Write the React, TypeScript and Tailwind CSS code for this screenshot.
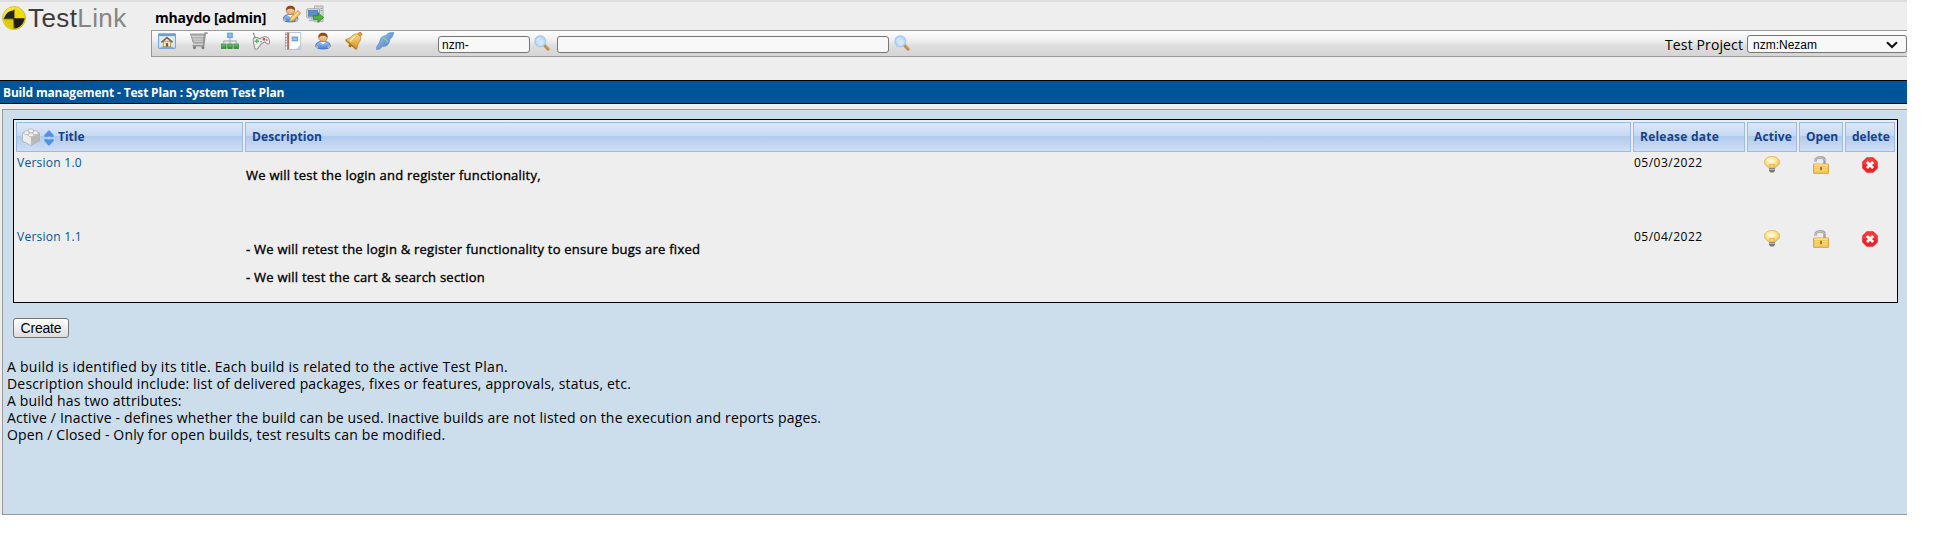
import type { ReactNode } from "react";

function Icon({ children, className = "w-4 h-4" }: { children: ReactNode; className?: string }) {
  return (
    <svg viewBox="0 0 16 16" className={"block shrink-0 " + className} aria-hidden="true">
      {children}
    </svg>
  );
}

function Defs() {
  return (
    <svg className="absolute h-0 w-0" aria-hidden="true">
      <defs>
        <linearGradient id="skin" x1="0" y1="0" x2="0" y2="1">
          <stop offset="0" stopColor="#f9dcb4" />
          <stop offset="1" stopColor="#e0a870" />
        </linearGradient>
        <linearGradient id="shirt" x1="0" y1="0" x2="0" y2="1">
          <stop offset="0" stopColor="#9ccbff" />
          <stop offset="1" stopColor="#3f7fdc" />
        </linearGradient>
        <linearGradient id="gold" x1="0" y1="0" x2="1" y2="1">
          <stop offset="0" stopColor="#ffe99a" />
          <stop offset="1" stopColor="#dc9020" />
        </linearGradient>
        <linearGradient id="green" x1="0" y1="0" x2="0" y2="1">
          <stop offset="0" stopColor="#7ec87a" />
          <stop offset="1" stopColor="#258a2c" />
        </linearGradient>
        <linearGradient id="plug" x1="0" y1="0" x2="1" y2="1">
          <stop offset="0" stopColor="#a8ccf5" />
          <stop offset="1" stopColor="#3c74bd" />
        </linearGradient>
        <radialGradient id="bulb" cx=".45" cy=".4" r=".6">
          <stop offset="0" stopColor="#fffef0" />
          <stop offset=".55" stopColor="#fde68c" />
          <stop offset="1" stopColor="#efb658" />
        </radialGradient>
        <radialGradient id="lens" cx=".55" cy=".6" r=".6">
          <stop offset="0" stopColor="#e2f1ff" />
          <stop offset="1" stopColor="#a5ccf5" />
        </radialGradient>
        <linearGradient id="yellow" x1="0" y1="0" x2="1" y2="1">
          <stop offset="0" stopColor="#fff04a" />
          <stop offset="1" stopColor="#dcc800" />
        </linearGradient>
      </defs>
    </svg>
  );
}

function Logo() {
  return (
    <svg viewBox="0 0 24 24" className="block h-6 w-6 shrink-0" aria-hidden="true">
      <circle cx="12" cy="12" r="11.600" fill="url(#yellow)" />
      <path d="M12 12.500V4.500C8 4 3.500 7 2 12.500Z" fill="#242424" />
      <path d="M11.500 12.500H22.500C22 17.500 17.500 22 12.500 22.500Z" fill="#1c1c1c" />
      <path d="M1.500 13.500H11V22C6.500 22 2.500 18 1.500 13.500Z" fill="#dccb00" />
      <path d="M12.500 2.500C18 3 21.500 6.500 22 11.500H12.500Z" fill="#efdc08" />
      <path d="M1.500 12.800H22.500M12 3.500V22.500" stroke="#2c2a10" strokeWidth=".9" />
      <circle cx="12" cy="12" r="11.500" fill="none" stroke="#b8ab20" strokeWidth=".6" />
    </svg>
  );
}

function Person() {
  return (
    <>
      <path d="M1.500 12.800C1.500 9.500 4 8.400 8 8.400s6.500 1.100 6.500 4.400c0 3-13 3-13 0Z" fill="url(#shirt)" stroke="#3b70c4" strokeWidth=".8" />
      <path d="M5.300 8.700h5.400L8 11Z" fill="#fff" />
      <path d="M1.700 12.300l1.900 2M14.300 12.300l-1.900 2" stroke="#e9b27c" strokeWidth="1.500" />
      <circle cx="8" cy="5" r="3.700" fill="url(#skin)" stroke="#b37339" strokeWidth=".6" />
      <path d="M4 5.400C3.500 1.800 5.300.6 8 .6s4.500 1.200 4 4.800C11.300 3.800 9.500 3.300 7.600 3.300S4.600 4.200 4 5.400Z" fill="#8f4a1c" />
    </>
  );
}

function UserIcon() {
  return <Icon className="h-[18px] w-[18px]"><Person /></Icon>;
}

function UserEditIcon() {
  return (
    <Icon className="h-[18px] w-[18px]">
      <g transform="translate(-1.300 0)"><Person /></g>
      <path d="M5.600 14.900l1-3.500 6.600-6.300 2.300 2.300-6.600 6.500Z" fill="#f9cf6a" stroke="#c98a2b" strokeWidth=".8" />
      <path d="M13.200 5.100l2.300 2.300" stroke="#eaa47c" strokeWidth="1.500" />
      <path d="M7.800 12.400l6-5.800" stroke="#fff0b8" strokeWidth=".8" />
    </Icon>
  );
}

function LogoutIcon() {
  return (
    <Icon className="h-[18px] w-[18px]">
      <path d="M7.500.8h7.700v14H7.500Z" fill="#d4d7da" stroke="#a2a6aa" strokeWidth=".7" />
      <path d="M13 3h1.500M13 5h1.500" stroke="#888" strokeWidth=".7" />
      <rect x=".7" y="3.400" width="11.300" height="8" rx=".6" fill="#e3e5e7" stroke="#909498" strokeWidth=".7" />
      <rect x="2.200" y="4.800" width="8.300" height="5.200" fill="#5590d2" stroke="#3768a6" strokeWidth=".5" />
      <path d="M2.500 13.800h6M5 11.500v2" stroke="#b5b9bd" strokeWidth="1.500" />
      <path d="M6.600 9.500H10.600V6.800L15.600 11.200 10.600 15.600V12.900H6.600Z" fill="#54ae43" stroke="#2f8027" strokeWidth=".7" />
    </Icon>
  );
}

function HomeIcon() {
  return (
    <Icon className="h-[18px] w-[18px]">
      <rect x=".5" y="1.500" width="15" height="13" rx=".7" fill="#dceafb" stroke="#7ba5dd" />
      <path d="M.5 2.600h15" stroke="#6f9cdb" strokeWidth="2" />
      <path d="M4.800 8.300h6.400v4.900H4.800Z" fill="#f4e6c8" stroke="#a98148" strokeWidth=".7" />
      <path d="M3 9.200L8 5l5 4.200" fill="none" stroke="#8d6437" strokeWidth="1.500" />
      <path d="M7 9.800h2v3.400H7Z" fill="#8a5a2c" />
      <path d="M2.500 13.500h11" stroke="#83a86d" />
    </Icon>
  );
}

function CartIcon() {
  return (
    <Icon className="h-[18px] w-[18px]">
      <path d="M.5 1.800H12.900L11.800 9.800H3Z" fill="#b4b4b4" stroke="#8b8b8b" strokeWidth=".8" />
      <path d="M1.500 4h10.700M2.200 6.300h9.700M3 8.300h8.600" stroke="#dcdcdc" strokeWidth=".6" />
      <path d="M15.700 1h-2.200L12.200 12H2.300" fill="none" stroke="#969696" strokeWidth="1.500" />
      <path d="M2.500 13h10" stroke="#b5b5b5" />
      <circle cx="4" cy="14" r="1.300" fill="#777" />
      <circle cx="11.500" cy="14" r="1.300" fill="#777" />
    </Icon>
  );
}

function TreeIcon() {
  return (
    <Icon className="h-[18px] w-[18px]">
      <rect x="6" y="1" width="4" height="4" fill="#8bbaf4" stroke="#5790dc" strokeWidth=".8" />
      <path d="M8 5.500v5M2.500 10V8h11v2" fill="none" stroke="#a1a8ae" strokeWidth=".9" />
      <rect x=".5" y="10.700" width="4" height="4" fill="url(#green)" stroke="#2c8a31" strokeWidth=".7" />
      <rect x="6" y="10.700" width="4" height="4" fill="url(#green)" stroke="#2c8a31" strokeWidth=".7" />
      <rect x="11.500" y="10.700" width="4" height="4" fill="url(#green)" stroke="#2c8a31" strokeWidth=".7" />
    </Icon>
  );
}

function GamepadIcon() {
  return (
    <Icon className="h-[18px] w-[18px]">
      <path d="M1 .7c1.400 1.200.3 3.200 2.300 4.600" fill="none" stroke="#8b8b8b" strokeWidth="1" />
      <path d="M1.400 5.600C3 4 5.500 5.200 7 6.200c1.500-1.300 3.600-2.400 5.600-1.900 2.400.7 3.300 3.600 3 5.300-.4 1.700-2.300 1.300-3.100.2l-1.100-1.100L8.300 10.600 5.200 14.400c-1.200 1.500-2.800 1.200-2.900-.5C2.100 11.500.2 7.500 1.400 5.600Z" fill="#ededed" stroke="#8e8e8e" strokeWidth=".9" />
      <path d="M4.300 6.300v3.800M2.400 8.200h3.800" stroke="#62b061" strokeWidth="1.300" />
      <circle cx="10.700" cy="6.500" r="1.200" fill="#e44" />
      <circle cx="13.200" cy="7.200" r=".8" fill="#e66" />
      <circle cx="8" cy="8.600" r=".8" fill="#8b9fc4" />
    </Icon>
  );
}

function NotebookIcon() {
  return (
    <Icon className="h-[18px] w-[18px]">
      <rect x="1.300" y=".6" width="13.600" height="14.800" fill="#fafcff" stroke="#a9b4c2" strokeWidth=".7" />
      <path d="M2.800.6h1.800v14.800H2.800Z" fill="#c06a4c" />
      <path d="M.8 2.300h2.400M.8 4.800h2.400M.8 7.300h2.400M.8 9.800h2.400M.8 12.300h2.400" stroke="#888" strokeWidth=".8" />
      <rect x="6.800" y="4" width="5.700" height="4.200" fill="#6799e0" />
      <path d="M7.500 5.400h4M7.500 6.800h4" stroke="#d6e6fc" strokeWidth=".6" />
      <path d="M10.800 15.100l4-4v4Z" fill="#c5d0df" />
    </Icon>
  );
}

function BellIcon() {
  return (
    <Icon className="h-[18px] w-[18px]">
      <g transform="rotate(40 8 8)">
        <path d="M6.700-1.500h2.900v3.600H6.700Z" fill="#e0a437" stroke="#b9781c" strokeWidth=".7" />
        <path d="M8 1.200c4 0 4.100 3.500 4.400 6.200.2 2 1.800 3.300 2.200 4.700H1.500c.3-1.400 1.900-2.700 2.100-4.700C3.900 4.700 4 1.200 8 1.200Z" fill="url(#gold)" stroke="#c78722" strokeWidth=".7" />
        <path d="M6 4.500l-.5 6" stroke="#fff5c8" strokeWidth="1.200" />
        <path d="M1.900 12.200h12.300" stroke="#b97a1a" strokeWidth="1.300" />
        <circle cx="8" cy="13.400" r="1.400" fill="#ad6b16" />
      </g>
    </Icon>
  );
}

function PlugIcon() {
  return (
    <Icon className="h-[18px] w-[18px]">
      <path d="M15.700.5l-4 .3C10 1.300 9.500 2.500 8.700 3.300 6.500 3.300 4.800 4.500 4 6.300c-.5 1.500-.5 3-1.700 4.400L.5 13.500v2l2.700-.3 2.600-2.500c1.900.2 3.700-.4 5-1.900 1.200-1.500 1.200-3 1.500-4.400 1.500-1 2.600-2.200 3.400-5.900Z" fill="url(#plug)" stroke="#5c8fcf" strokeWidth=".7" />
      <path d="M6.200 5.100c2 .8 3.700 2.500 4.300 4.500" fill="none" stroke="#8bcf85" strokeWidth="1.200" />
    </Icon>
  );
}

function SearchIcon() {
  return (
    <Icon>
      <path d="M10.700 10.500l3.300 3.500" stroke="#c18a4c" strokeWidth="3.200" strokeLinecap="round" />
      <path d="M11.700 10.700l2.500 2.700" stroke="#e1b17d" strokeWidth=".8" />
      <circle cx="6.300" cy="6.300" r="5.400" fill="url(#lens)" stroke="#a3c7ed" strokeWidth="1.100" />
      <path d="M3 6.300c0-2 1.300-3.300 3.300-3.300" fill="none" stroke="#f5faff" strokeWidth=".9" />
    </Icon>
  );
}

function BrickIcon() {
  return (
    <Icon className="h-[18px] w-[18px]">
      <path d="M.5 4.500L8 1l7.500 3.500v7L8 15.500.5 11.500Z" fill="#d8d8d8" stroke="#a9a9a9" strokeWidth=".7" />
      <path d="M.8 4.700L8 8v7.200L.8 11.300Z" fill="#ececec" />
      <path d="M15.200 4.700L8 8v7.200l7.200-3.900Z" fill="#b8b8b8" />
      <path d="M.8 4.600L8 1.200l7.200 3.400L8 7.800Z" fill="#d4d4d4" />
      <g fill="#f2f2f2" stroke="#adadad" strokeWidth=".6">
        <path d="M5.900 1.700v1.600c0 1.200 4.200 1.200 4.200 0V1.700c0-1.200-4.200-1.200-4.200 0Z" />
        <path d="M2 3.400V5c0 1.200 4.200 1.200 4.200 0V3.400c0-1.200-4.200-1.200-4.200 0Z" />
        <path d="M9.800 3.400V5c0 1.200 4.200 1.200 4.200 0V3.400c0-1.200-4.200-1.200-4.200 0Z" />
        <path d="M5.900 5.300v1.600c0 1.200 4.200 1.200 4.200 0V5.300c0-1.200-4.200-1.200-4.200 0Z" />
      </g>
    </Icon>
  );
}

function SortIcon() {
  return (
    <svg viewBox="0 0 10 16" className="block h-4 w-2.5 shrink-0" aria-hidden="true">
      <path d="M5 .5L9.300 5v1.500H7L5 6 3 6.500H.7V5Z" fill="#4b96e8" stroke="#4388da" strokeWidth=".6" />
      <path d="M5 15.500L9.300 11V9.500H7L5 10 3 9.500H.7V11Z" fill="#4b96e8" stroke="#4388da" strokeWidth=".6" />
    </svg>
  );
}

function BulbIcon() {
  return (
    <svg viewBox="0 0 16 17" className="block h-[17px] w-4 shrink-0" aria-hidden="true">
      <path d="M8 .4C12.400.4 15.600 3 15.600 6.400 15.600 9.600 11.600 10.300 11 12.500H5C4.400 10.300.4 9.600.4 6.400.4 3 3.600.4 8 .4Z" fill="url(#bulb)" stroke="#e2b067" strokeWidth=".8" />
      <path d="M6.300 12L5.700 8l2.300 1 2.300-1-.6 4" fill="none" stroke="#eda934" strokeWidth=".9" />
      <path d="M5 12.300h6v2.500L9.700 16.600H6.300L5 14.800Z" fill="#76797b" />
      <path d="M5.200 13.500h5.600" stroke="#c5c9cc" strokeWidth=".8" />
    </svg>
  );
}

function LockOpenIcon() {
  return (
    <svg viewBox="0 0 16 18" className="block h-[18px] w-4 shrink-0" aria-hidden="true">
      <path d="M2.600 5.800V4.200C2.600.4 11.500.4 11.500 4.200V8" fill="none" stroke="#a4a4a4" strokeWidth="2.600" />
      <path d="M2.600 5.500V4.200C2.600.6 11.400.6 11.500 4.200" fill="none" stroke="#cdcdcd" strokeWidth=".8" />
      <rect x=".5" y="8" width="15" height="9.400" rx=".4" fill="#f6c85c" stroke="#dc9d35" strokeWidth=".9" />
      <path d="M1.200 9h13.600" stroke="#fff1a8" />
      <path d="M2 11.500h12M2 14h12" stroke="#fbe189" strokeWidth=".8" />
      <path d="M7.200 10.800h1.600v3.500H7.200Z" fill="#946421" />
    </svg>
  );
}

function DeleteIcon() {
  return (
    <Icon>
      <path d="M4.800.2h6.400l4.600 4.600v6.400l-4.600 4.600H4.800L.2 11.200V4.800Z" fill="#ee2328" />
      <path d="M5.200 1h5.600L15 5.200v2.500H1V5.200Z" fill="#f7393c" />
      <path d="M4.900 4.900l6.200 6.200M11.100 4.900l-6.200 6.200" stroke="#fff" strokeWidth="2.800" />
    </Icon>
  );
}

const toolbar = [
  { Comp: HomeIcon, space: "ml-1.5" },
  { Comp: CartIcon, space: "ml-3.5" },
  { Comp: TreeIcon, space: "ml-[13px]" },
  { Comp: GamepadIcon, space: "ml-[13px]" },
  { Comp: NotebookIcon, space: "ml-3.5" },
  { Comp: UserIcon, space: "ml-3" },
  { Comp: BellIcon, space: "ml-[13px]" },
  { Comp: PlugIcon, space: "ml-[13px]" },
];

const builds = [
  { name: "Version 1.0", date: "05/03/2022", notes: ["We will test the login and register functionality,"] },
  {
    name: "Version 1.1",
    date: "05/04/2022",
    notes: [
      "- We will retest the login & register functionality to ensure bugs are fixed",
      "- We will test the cart & search section",
    ],
  },
];

const help = [
  { text: "A build is identified by its title. Each build is related to the active Test Plan.", track: "tracking-[0.26px]" },
  { text: "Description should include: list of delivered packages, fixes or features, approvals, status, etc.", track: "tracking-[0.18px]" },
  { text: "A build has two attributes:", track: "tracking-[0.14px]" },
  { text: "Active / Inactive - defines whether the build can be used. Inactive builds are not listed on the execution and reports pages.", track: "tracking-[0.175px]" },
  { text: "Open / Closed - Only for open builds, test results can be modified.", track: "tracking-[0.15px]" },
];

const columns = "grid grid-cols-[227px_1386px_112px_50px_44px_50px] gap-x-0.5 px-0.5";
const headCell =
  "flex h-[30px] items-center whitespace-nowrap border border-[#99bbe8] bg-[linear-gradient(#dce8f8_0%,#c5d9f3_46%,#b1caec_47%,#cfdff5_100%)] text-xs font-bold text-[#15428b]";

export default function App() {
  return (
    <div className="h-[548px] w-[1944px] overflow-hidden bg-white font-['Open_Sans',sans-serif] text-black">
      <Defs />
      <div className="flex h-[515px] w-[1907px] flex-col border-t-2 border-[#dddddd] bg-[#eeeeee]">
        <header className="flex h-[78px] shrink-0">
          <div className="flex w-[151px] pl-0.5 pt-1">
            <Logo />
            <div className="ml-0.5 whitespace-nowrap font-['Liberation_Sans',sans-serif] text-[26px] leading-6 tracking-[0.4px] text-[#3c3c3c]">
              Test<span className="text-[#858585]">Link</span>
            </div>
          </div>
          <div className="flex-1">
            <div className="flex h-7 pl-1">
              <div className="w-32 whitespace-nowrap pt-1.5 text-sm font-bold leading-5 tracking-[-0.23px]">mhaydo [admin]</div>
              <div className="flex gap-[5px] pt-[3px]">
                <UserEditIcon />
                <LogoutIcon />
              </div>
            </div>
            <div className="flex h-[27px] items-start border-y border-l border-[#999999] bg-[linear-gradient(#ffffff_0%,#eeeeee_40%,#dddddd_60%,#d5d5d5_100%)]">
              <div className="flex pt-px">
                {toolbar.map(({ Comp, space }, i) => (
                  <div key={i} className={space}><Comp /></div>
                ))}
              </div>
              <input
                className="ml-11 mt-[5px] h-[17px] w-[92px] rounded-[3px] border border-[#767676] bg-[#f8f8f8] px-[3px] font-['Liberation_Sans',sans-serif] text-xs"
                defaultValue="nzm-"
              />
              <div className="ml-1 mt-1"><SearchIcon /></div>
              <input className="ml-[7px] mt-[5px] h-[17px] w-[332px] rounded-[3px] border border-[#767676] bg-[#f8f8f8] px-[3px] text-xs" />
              <div className="ml-[5px] mt-1"><SearchIcon /></div>
              <div className="flex-1" />
              <div className="mr-1 whitespace-nowrap pt-[5px] text-sm leading-[18px] tracking-[0.12px]">Test Project</div>
              <div className="mt-1 flex h-[18px] w-40 items-center justify-between rounded-[3px] border border-[#767676] bg-[#f8f8f8] pl-[5px] pr-[7px] font-['Liberation_Sans',sans-serif] text-xs">
                <span className="pt-0.5">nzm:Nezam</span>
                <svg viewBox="0 0 14 8" className="mt-px h-2 w-3.5" aria-hidden="true">
                  <path d="M2 1.200l5 4.800 5-4.800" fill="none" stroke="#111" strokeWidth="2" />
                </svg>
              </div>
            </div>
          </div>
        </header>

        <h1 className="h-6 shrink-0 whitespace-nowrap border-y border-black bg-[#005498] pl-[3px] text-xs font-bold leading-[23px] tracking-[-0.18px] text-white">
          Build management - Test Plan : System Test Plan
        </h1>

        <main className="ml-0.5 mt-[5px] flex-1 border-b border-l border-t border-[#999999] bg-[#ccddec]">
          <section className="ml-2.5 mt-[9px] h-[184px] w-[1885px] border border-black bg-[#eeeeee] pt-0.5">
            <div className={columns}>
              <div className={headCell + " pl-[5px]"}>
                <BrickIcon />
                <span className="ml-1 mt-0.5"><SortIcon /></span>
                <span className="ml-1 leading-4">Title</span>
              </div>
              <div className={headCell + " pl-1.5 tracking-[0.1px]"}>Description</div>
              <div className={headCell + " pl-1.5 tracking-[0.22px]"}>Release date</div>
              <div className={headCell + " pl-1.5 tracking-[0.1px]"}>Active</div>
              <div className={headCell + " pl-1.5"}>Open</div>
              <div className={headCell + " pl-1.5"}>delete</div>
            </div>
            {builds.map((b) => (
              <div key={b.name} className={columns + " h-[74px] pt-0.5"}>
                <a className="pl-px pt-px text-xs leading-4 tracking-[0.26px] text-[#005498]">{b.name}</a>
                <div className="whitespace-nowrap pl-px pt-[7px] text-[13px] leading-7 tracking-[0.235px] [-webkit-text-stroke:0.35px_#000]">
                  {b.notes.map((n) => <p key={n}>{n}</p>)}
                </div>
                <div className="pl-px pt-px text-xs leading-4 tracking-[0.5px]">{b.date}</div>
                <div className="flex justify-center pt-0.5"><BulbIcon /></div>
                <div className="flex justify-center pt-0.5"><LockOpenIcon /></div>
                <div className="flex justify-center pt-[3px]"><DeleteIcon /></div>
              </div>
            ))}
          </section>
          <button className="ml-2.5 mt-[15px] block h-5 w-14 rounded-[3px] border border-[#767676] bg-[linear-gradient(#ffffff,#dddddd)] font-['Liberation_Sans',sans-serif] text-sm leading-[18px] tracking-[-0.2px]">
            Create
          </button>
          <div className="ml-1 mt-5 text-sm leading-[17px]">
            {help.map((h) => (
              <p key={h.text} className={"whitespace-nowrap " + h.track}>{h.text}</p>
            ))}
          </div>
        </main>
      </div>
    </div>
  );
}
